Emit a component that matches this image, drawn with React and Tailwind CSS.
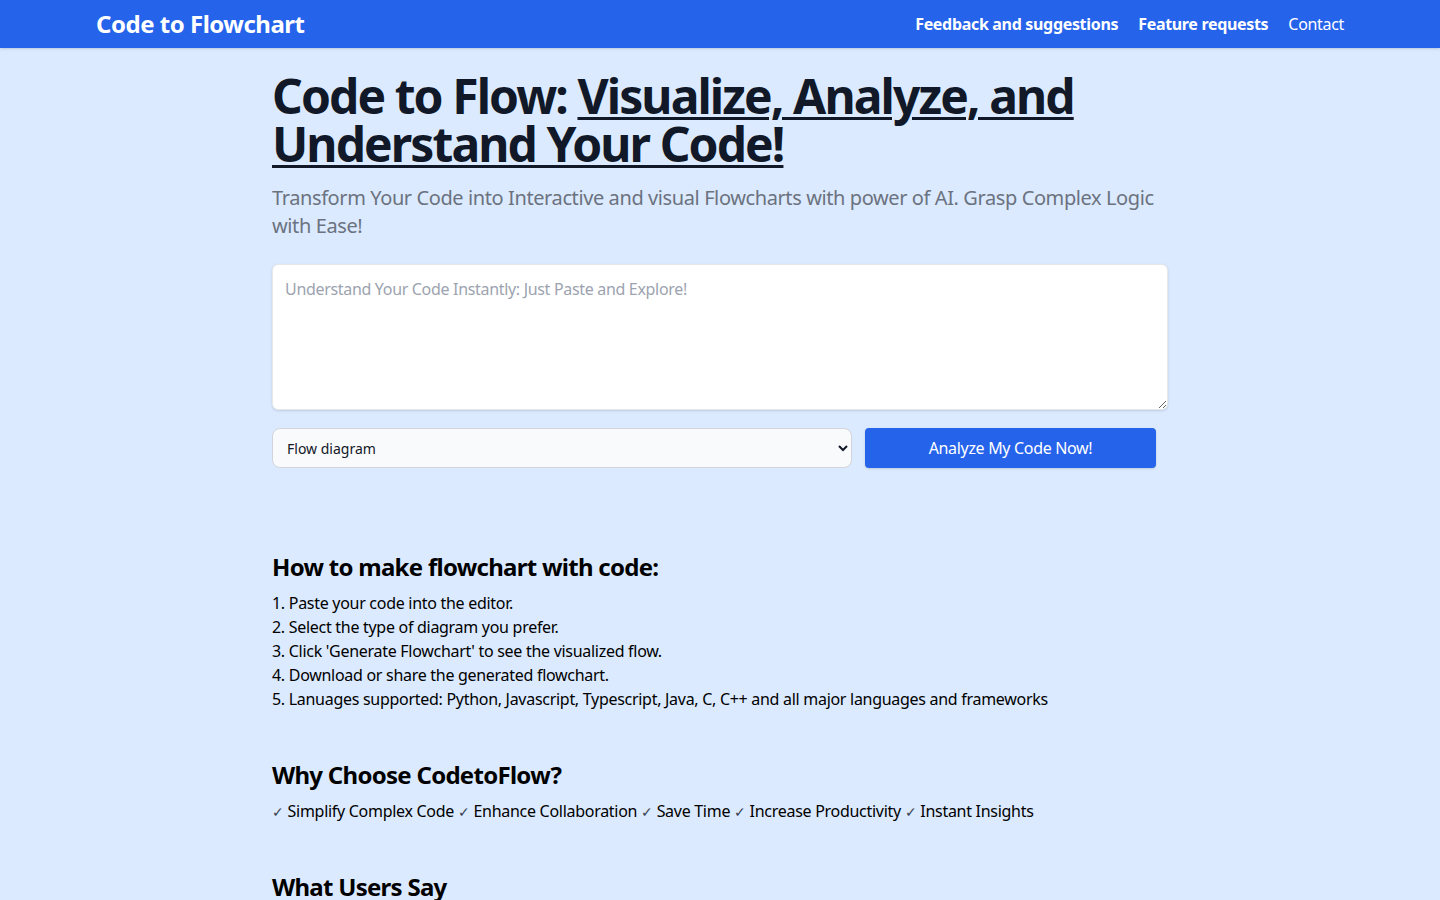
import React, { useState } from 'react';

const steps = [
  '1. Paste your code into the editor.',
  '2. Select the type of diagram you prefer.',
  "3. Click 'Generate Flowchart' to see the visualized flow.",
  '4. Download or share the generated flowchart.',
  '5. Lanuages supported: Python, Javascript, Typescript, Java, C, C++ and all major languages and frameworks',
];

const perks = ['Simplify Complex Code', 'Enhance Collaboration', 'Save Time', 'Increase Productivity', 'Instant Insights'];

const Header = () => (
  <header className="bg-[#2563eb] h-12 shadow-sm">
    <div className="h-full px-24 flex items-center justify-between">
      <a href="#" className="text-white text-2xl font-bold tracking-[-0.02em]">Code to Flowchart</a>
      <nav className="flex items-center gap-5 text-white text-base tracking-[-0.02em]">
        <a href="#" className="font-bold">Feedback and suggestions</a>
        <a href="#" className="font-bold">Feature requests</a>
        <a href="#">Contact</a>
      </nav>
    </div>
  </header>
);

const App = () => {
  const [code, setCode] = useState('');
  const [kind, setKind] = useState('flow');

  return (
    <div className="min-h-screen bg-[#dbeafe] font-['Noto_Sans',sans-serif]">
      <Header />

      <main className="max-w-4xl mx-auto pt-6">
        <h1 className="text-5xl leading-[48px] font-bold text-[#111827] tracking-[-0.04em]">
          Code to Flow: <span className="underline decoration-[3px] underline-offset-[3px]">Visualize, Analyze, and Understand Your Code!</span>
        </h1>
        <p className="mt-4 text-xl text-[#6b7280] tracking-[-0.02em]">
          Transform Your Code into Interactive and visual Flowcharts with power of AI. Grasp Complex Logic with Ease!
        </p>

        <textarea
          value={code}
          onChange={(e) => setCode(e.target.value)}
          placeholder="Understand Your Code Instantly: Just Paste and Explore!"
          className="mt-6 block w-full h-[146px] rounded-md bg-white border border-[#e5e7eb] shadow-sm p-3 text-base tracking-[-0.02em] text-[#111827] placeholder:text-[#9ca3af] outline-none"
        />

        <div className="mt-[18px] flex items-center gap-[13px]">
          <select
            value={kind}
            onChange={(e) => setKind(e.target.value)}
            className="w-[580px] h-10 rounded-lg border border-[#d1d5db] bg-[#f9fafb] px-[10px] text-sm text-[#111827]"
          >
            <option value="flow">Flow diagram</option>
            <option value="seq">Sequence diagram</option>
            <option value="class">Class diagram</option>
          </select>
          <button className="w-[291px] h-10 rounded bg-[#2563eb] text-white text-base tracking-[-0.02em] shadow-sm">
            Analyze My Code Now!
          </button>
        </div>

        <section className="mt-[83px]">
          <h2 className="text-2xl font-bold text-black tracking-[-0.03em]">How to make flowchart with code:</h2>
          <ol className="mt-2 text-base text-black tracking-[-0.018em]">
            {steps.map((s) => (
              <li key={s}>{s}</li>
            ))}
          </ol>
        </section>

        <section className="mt-12">
          <h2 className="text-2xl font-bold text-black tracking-[-0.03em]">Why Choose CodetoFlow?</h2>
          <p className="mt-2 text-base text-black tracking-[-0.018em]">
            {perks.map((p, i) => (
              <span key={p}>
                {i > 0 && ' '}
                <span className="text-[#374151] text-sm">✓</span> {p}
              </span>
            ))}
          </p>
        </section>

        <section className="mt-12 pb-10">
          <h2 className="text-2xl font-bold text-black tracking-[-0.03em]">What Users Say</h2>
        </section>
      </main>
    </div>
  );
};

export default App;
